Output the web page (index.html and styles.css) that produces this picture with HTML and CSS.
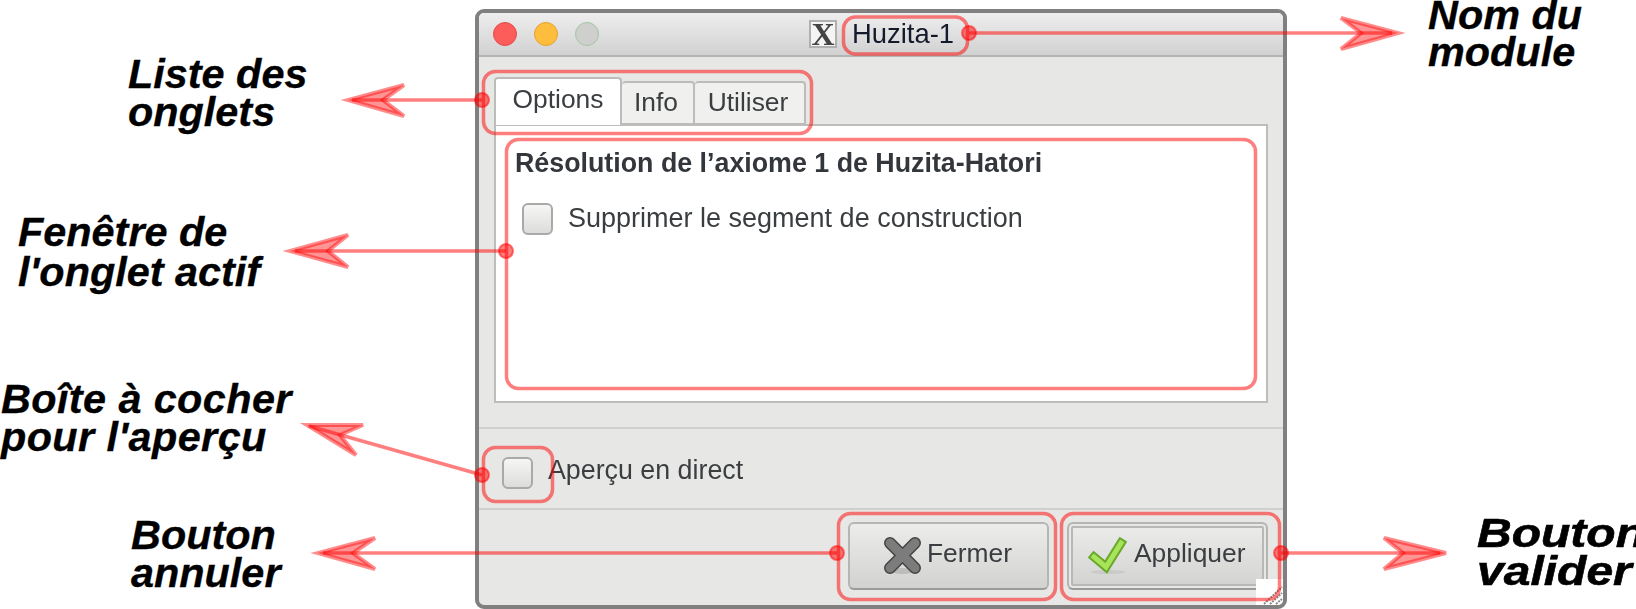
FILE: index.html
```html
<!DOCTYPE html>
<html lang="fr">
<head>
<meta charset="utf-8">
<title>Huzita-1</title>
<link rel="stylesheet" href="styles.css">
</head>
<body>
<main class="canvas">
  <section class="window">
    <header class="titlebar">
      <div class="lights">
        <span class="light light-red"></span>
        <span class="light light-yellow"></span>
        <span class="light light-gray"></span>
      </div>
      <div class="title">
        <span class="x-icon">X</span>
        <span class="title-text">Huzita-1</span>
      </div>
    </header>
    <div class="tabs">
      <span class="tab tab-active tab-options">Options</span>
      <span class="tab tab-info">Info</span>
      <span class="tab tab-use">Utiliser</span>
    </div>
    <div class="pane">
      <h1 class="pane-title">Résolution de l’axiome 1 de Huzita-Hatori</h1>
      <div class="check-row pane-check">
        <span class="checkbox"></span>
        <span class="check-label label-long">Supprimer le segment de construction</span>
      </div>
    </div>
    <div class="preview">
      <span class="checkbox"></span>
      <span class="check-label label-preview">Aperçu en direct</span>
    </div>
    <div class="actions">
      <button class="btn btn-close" type="button">
        <svg class="btn-icon" width="37" height="38" viewBox="0 0 37 38" aria-hidden="true">
          <ellipse cx="18.5" cy="34" rx="13" ry="3" fill="#bdbdbb"/>
          <path class="x-outer" d="M6 6 31 31M31 6 6 31"/>
          <path class="x-inner" d="M6 6 31 31M31 6 6 31"/>
        </svg>
        <span class="btn-text">Fermer</span>
      </button>
      <button class="btn btn-apply" type="button">
        <svg class="btn-icon" width="39" height="38" viewBox="0 0 39 38" aria-hidden="true">
          <ellipse cx="20" cy="35" rx="17" ry="2" fill="#cacac8"/>
          <path class="c-outer" d="M6 20 18 30 33 6"/>
          <path class="c-inner" d="M6 20 18 30 33 6"/>
        </svg>
        <span class="btn-text">Appliquer</span>
      </button>
    </div>
    <div class="grip">
      <svg width="27" height="26" viewBox="0 0 27 26" aria-hidden="true">
        <path class="grip-lines" d="M8 25 26 8M14 25 26 14M20 25 26 20"/>
      </svg>
    </div>
  </section>

  <svg class="marks" width="1636" height="609" viewBox="0 0 1636 609" aria-hidden="true">
    <rect class="box" x="843.5" y="17" width="124" height="37" rx="12"/>
    <rect class="box" x="483.5" y="71.5" width="328" height="62" rx="12"/>
    <rect class="box" x="506.5" y="139.5" width="749" height="249" rx="12"/>
    <rect class="box" x="483.5" y="447.5" width="69" height="54" rx="12"/>
    <rect class="box" x="838.5" y="513.5" width="217" height="86" rx="12"/>
    <rect class="box" x="1061.5" y="513.5" width="218" height="86" rx="12"/>

    <path class="lead" d="M969 33H1392"/>
    <path class="head" d="M1341 18 1398 33 1341 49 1361 33Z"/>
    <circle class="dot" cx="969" cy="33" r="7"/>

    <path class="lead" d="M482 100H352"/>
    <path class="head" d="M404 85 348 100 404 116 383 100Z"/>
    <circle class="dot" cx="482" cy="100" r="7"/>

    <path class="lead" d="M506 251H295"/>
    <path class="head" d="M348 235 290 251 348 267 328 251Z"/>
    <circle class="dot" cx="506" cy="251" r="7"/>

    <path class="lead" d="M482 475 309 426"/>
    <path class="head" d="M363 425 307 425 356 455 340 435Z"/>
    <circle class="dot" cx="482" cy="475" r="7"/>

    <path class="lead" d="M837 553H323"/>
    <path class="head" d="M375 538 318 553 375 569 353 553Z"/>
    <circle class="dot" cx="837" cy="553" r="7"/>

    <path class="lead" d="M1281 553H1440"/>
    <path class="head" d="M1384 538 1446 553 1384 569 1403 553Z"/>
    <circle class="dot" cx="1281" cy="553" r="7"/>
  </svg>

  <p class="note note-name">Nom du<br>module</p>
  <p class="note note-tabs">Liste des<br>onglets</p>
  <p class="note note-pane">Fenêtre de<br>l'onglet actif</p>
  <p class="note note-preview">Boîte à cocher<br>pour l'aperçu</p>
  <p class="note note-cancel">Bouton<br>annuler</p>
  <p class="note note-apply">Bouton<br>valider</p>
</main>
</body>
</html>
```

FILE: styles.css
```css
* { box-sizing: border-box; }

html, body {
  margin: 0;
  padding: 0;
  background: #fff;
}

.canvas {
  position: relative;
  width: 1636px;
  height: 609px;
  overflow: hidden;
  font-family: "Liberation Sans", Arial, sans-serif;
}

/* Window */
.window {
  position: absolute;
  left: 475px;
  top: 9px;
  width: 812px;
  height: 600px;
  display: flex;
  flex-direction: column;
  border: 4px solid #808080;
  border-radius: 9px;
  background: #e7e7e5;
  color: #3b3e41;
  font-size: 26.4px;
  overflow: hidden;
  filter: blur(0.5px);
}

.titlebar {
  display: flex;
  align-items: center;
  height: 44px;
  flex: none;
  padding-left: 14px;
  background: linear-gradient(#eeeeee, #d1d1d1);
  border-bottom: 2px solid #b4b4b2;
}

.lights {
  display: flex;
  gap: 17px;
}

.light {
  width: 24px;
  height: 24px;
  border-radius: 50%;
  border: 1px solid;
}

.light-red { background: #fc5c5a; border-color: #e64a4a; }
.light-yellow { background: #ffbd3e; border-color: #e5a32f; }
.light-gray { background: #cfcfcd; border-color: #a3c8a0; }

.title {
  display: flex;
  align-items: center;
  gap: 15px;
  margin-left: 210px;
}

.x-icon {
  width: 28px;
  height: 28px;
  display: flex;
  align-items: center;
  justify-content: center;
  background: #f4f4f4;
  border: 2px solid #b0b0b0;
  color: #444;
  font-family: "Liberation Serif", serif;
  font-weight: 700;
  font-size: 32px;
  line-height: 1;
}

.title-text {
  color: #141a2c;
  font-size: 27.4px;
  line-height: 30px;
}

/* Tabs */
.tabs {
  display: flex;
  align-items: flex-end;
  height: 68px;
  flex: none;
  margin-left: 15px;
  position: relative;
  z-index: 1;
  margin-bottom: -1px;
}

.tab {
  display: flex;
  align-items: center;
  justify-content: center;
  height: 44px;
  padding-right: 3px;
  padding-bottom: 2px;
  background: #f0f0ee;
  border: 2px solid #bcbcba;
  border-radius: 4px 4px 0 0;
  border-left: 0;
}

.tab-active {
  height: 48px;
  padding-right: 0;
  padding-bottom: 6px;
  background: #fff;
  border-left: 2px solid #bcbcba;
  border-bottom: 0;
}

.tab-options { width: 128px; }
.tab-info { width: 73px; }
.tab-use { width: 111px; }

/* Pane */
.pane {
  height: 279px;
  flex: none;
  margin: 0 15px 0 15px;
  padding: 24px 0 0 19px;
  background: #fff;
  border: 2px solid #bdbdb9;
}

.pane-title {
  margin: 0;
  font-size: 26.8px;
  line-height: 26px;
  font-weight: 700;
  color: #33363a;
}

.check-row {
  display: flex;
  align-items: center;
}

.pane-check {
  margin: 27px 0 0 7px;
}

.checkbox {
  display: block;
  flex: none;
  width: 31px;
  height: 32px;
  border-radius: 6px;
  border: 2px solid #a9a9a7;
  background: linear-gradient(#f6f6f5, #dcdcda);
}

.check-label {
  line-height: 30px;
}

.label-long {
  margin-left: 15px;
  margin-top: -2px;
  font-size: 27px;
}

/* Bottom rows */
.preview {
  display: flex;
  align-items: center;
  height: 83px;
  flex: none;
  margin-top: 24px;
  padding-left: 23px;
  padding-top: 8px;
  border-top: 2px solid #cfcfcd;
  border-bottom: 2px solid #cfcfcd;
}

.label-preview {
  margin-left: 15px;
  margin-top: -6px;
  font-size: 26.8px;
}

.actions {
  display: flex;
  justify-content: flex-end;
  gap: 18px;
  padding: 12px 15px 0 0;
}

.btn {
  display: flex;
  align-items: center;
  width: 201px;
  height: 68px;
  padding: 0;
  border: 2px solid #b5b5b3;
  border-bottom-color: #9b9b99;
  border-radius: 6px;
  background: linear-gradient(#ececea, #d2d2d0);
  color: inherit;
  font: inherit;
}

.btn-close {
  padding-left: 34px;
  gap: 6px;
}

.btn-apply {
  padding-left: 19px;
  gap: 7px;
  box-shadow: inset 0 0 0 2px #e7e7e5, inset 0 0 0 4px #b8b8b6;
}

.btn-icon { flex: none; }
.btn-text { margin-top: -6px; }

.x-outer, .x-inner, .c-outer, .c-inner {
  fill: none;
  stroke-linecap: round;
  stroke-linejoin: round;
}

.x-outer { stroke: #444; stroke-width: 12px; }
.x-inner { stroke: #7c7c7c; stroke-width: 9px; }
.c-outer { stroke: #68a82a; stroke-width: 9px; stroke-linecap: square; stroke-linejoin: miter; }
.c-inner { stroke: #a8e45a; stroke-width: 5px; stroke-linecap: square; stroke-linejoin: miter; }

.grip {
  position: absolute;
  right: 0;
  bottom: 0;
  width: 27px;
  height: 26px;
  background: #fff;
}

.grip svg { display: block; }

.grip-lines {
  fill: none;
  stroke: #8a8a8a;
  stroke-width: 2px;
  stroke-dasharray: 2 1;
}

/* Annotation overlay */
.marks {
  position: absolute;
  left: 0;
  top: 0;
}

.box {
  fill: none;
  stroke: rgba(255, 0, 0, 0.5);
  stroke-width: 3.5px;
}

.lead {
  fill: none;
  stroke: rgba(255, 0, 0, 0.5);
  stroke-width: 3.5px;
}

.head {
  fill: rgba(255, 0, 0, 0.42);
  stroke: rgba(255, 0, 0, 0.45);
  stroke-width: 4px;
  stroke-linejoin: miter;
}

.dot {
  fill: rgba(255, 0, 0, 0.5);
  stroke: rgba(255, 0, 0, 0.5);
  stroke-width: 2px;
}

/* Labels */
.note {
  position: absolute;
  margin: 0;
  color: #000;
  font-size: 41.4px;
  line-height: 38px;
  font-weight: 700;
  font-style: italic;
  white-space: nowrap;
  -webkit-text-stroke: 0.3px #000;
}

.note-name { left: 1428px; top: -3px; line-height: 37px; }
.note-tabs { left: 128px; top: 55px; }
.note-pane { left: 18px; top: 212px; line-height: 40px; }
.note-preview { left: 1px; top: 380px; letter-spacing: 0.4px; }
.note-cancel { left: 131px; top: 516px; }
.note-apply {
  left: 1477px;
  top: 514px;
  transform: scaleX(1.16);
  transform-origin: left top;
  -webkit-text-stroke: 0.6px #000;
}
```
